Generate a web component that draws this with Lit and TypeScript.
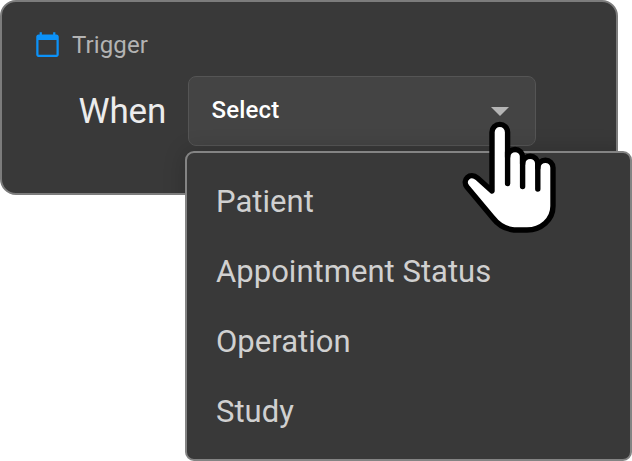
import { LitElement, html, css } from "lit";
import { customElement } from "lit/decorators.js";

@customElement("trigger-card")
class TriggerCard extends LitElement {
  static styles = css`
    :host {
      display: block;
      position: relative;
      overflow: hidden;
      box-sizing: border-box;
      width: 618px;
      height: 195px;
      padding: 28px 0 0 32px;
      background: #393939;
      border: 2px solid #7c7c7c;
      border-radius: 16px;
    }
    .heading {
      display: flex;
      align-items: center;
      height: 30px;
      color: #b3b3b3;
      font-size: 24px;
      letter-spacing: 0.12px;
    }
    .calendar {
      width: 27px;
      height: 27px;
      margin: 0 11px 1px 0;
      fill: #0c92f8;
    }
    .row {
      display: flex;
      align-items: center;
      margin: 16px 0 0 44px;
    }
    .when {
      box-sizing: border-box;
      width: 110px;
      padding-left: 0.5px;
      color: #ececec;
      font-size: 35px;
      letter-spacing: -0.15px;
    }
    .select {
      display: flex;
      align-items: center;
      justify-content: space-between;
      box-sizing: border-box;
      width: 347.5px;
      height: 70px;
      padding: 0 26px 2px 22.5px;
      border: 1px solid #555;
      border-radius: 8px;
      background: #444;
      color: #fff;
      font-size: 24px;
      font-weight: 500;
      letter-spacing: 0.15px;
    }
    .arrow {
      width: 18px;
      height: 9px;
      margin-top: 2px;
      fill: #b5b5b5;
    }
    .shade {
      position: absolute;
      left: 183px;
      top: 149px;
      width: 447px;
      height: 310px;
      border-radius: 9px;
      box-shadow: 0 0 22px rgba(0, 0, 0, 0.2);
    }
  `;
  render() {
    return html`
      <div class="heading">
        <svg class="calendar" viewBox="0 0 24 24">
          <path d="M20 3h-1V1h-2v2H7V1H5v2H4c-1.1 0-2 .9-2 2v16c0 1.1.9 2 2 2h16c1.1 0 2-.9 2-2V5c0-1.1-.9-2-2-2zm0 18H4V8h16v13z" />
        </svg>
        <span>Trigger</span>
      </div>
      <div class="row">
        <span class="when">When</span>
        <div class="select">
          <span>Select</span>
          <svg class="arrow" viewBox="0 0 18 9"><path d="M0 0h18L9 9z" /></svg>
        </div>
      </div>
      <div class="shade"></div>
    `;
  }
}

@customElement("option-menu")
class OptionMenu extends LitElement {
  static styles = css`
    :host {
      display: block;
      box-sizing: border-box;
      width: 447px;
      height: 310px;
      padding: 14px 0 0 29px;
      background: #393939;
      border: 2px solid #848484;
      border-radius: 9px;
    }
    .option {
      height: 70px;
      line-height: 70px;
      color: #d0d0d0;
      font-size: 31px;
      letter-spacing: 0.03px;
    }
  `;
  render() {
    return ["Patient", "Appointment Status", "Operation", "Study"].map(
      (label) => html`<div class="option">${label}</div>`
    );
  }
}

@customElement("app-root")
class AppRoot extends LitElement {
  static styles = css`
    :host {
      display: block;
      position: relative;
      width: 632px;
      height: 461px;
      overflow: hidden;
      background: #fff;
      font-family: Roboto, sans-serif;
    }
    .menu {
      position: absolute;
      left: 185px;
      top: 151px;
    }
    .pointer {
      position: absolute;
      left: 460px;
      top: 119px;
      width: 100px;
      height: 118px;
      fill: #fff;
      stroke: #000;
      stroke-width: 5.4;
      stroke-linecap: round;
      stroke-linejoin: round;
    }
  `;
  render() {
    return html`
      <trigger-card></trigger-card>
      <option-menu class="menu"></option-menu>
      <svg class="pointer" viewBox="460 119 100 118">
        <path
          d="M492 191V132.200a7.800 7.800 0 0 1 15.600 0V157a7.500 7.500 0 0 1 15 0V163.800a7.600 7.600 0 0 1 15.200 0V167.800a7.600 7.600 0 0 1 15.200 0V206C553 220 541 230 527 230H514C504 229 497.500 224 492.500 217.500L467 187C461.500 180 470 171.500 477.500 178Z"
        />
        <path d="M507.600 152V183.500M522.600 157V186.500M537.800 163V189" fill="none" />
      </svg>
    `;
  }
}
